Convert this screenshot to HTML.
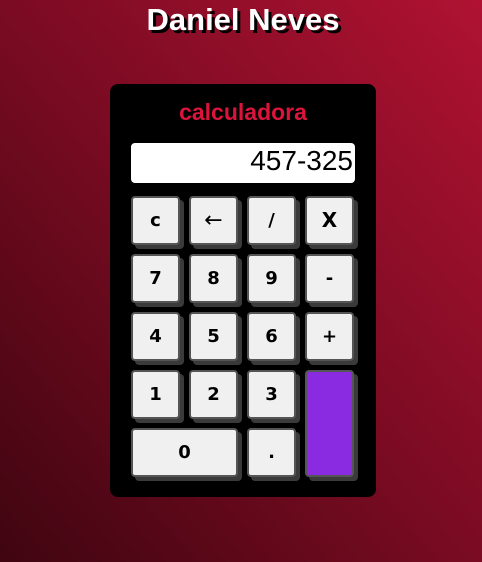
<!DOCTYPE html>
<html><head><meta charset="utf-8"><style>
html,body{margin:0;padding:0;}
body{width:482px;height:562px;overflow:hidden;position:relative;
background:linear-gradient(to top right,#3f0510 0%,#7a0b22 50%,#b01232 100%);
font-family:"Liberation Sans",Arial,sans-serif;}
h1{position:absolute;top:1px;left:0;width:486px;margin:0;text-align:center;color:#fff;font-size:31px;font-weight:bold;text-shadow:3px 3px 0 #000;line-height:38px;}
.panel{position:absolute;left:110px;top:84px;width:266px;height:413px;background:#000;border-radius:8px;}
.t{position:absolute;left:0;width:266px;top:15px;text-align:center;color:#dc143c;font-weight:bold;font-size:23px;}
.disp{position:absolute;left:21px;top:59px;width:224px;height:40px;background:#fff;border-radius:4px;font-size:28px;text-align:right;box-sizing:border-box;padding-right:2px;line-height:36px;color:#000;}
.b{position:absolute;width:49px;height:49px;box-sizing:border-box;border:2px solid #555;border-radius:4px;background:#f0f0f0;box-shadow:4px 4px 0 #3a3a3a;font-family:"DejaVu Sans","Liberation Sans",sans-serif;font-weight:bold;font-size:18px;text-align:center;line-height:45px;color:#000;}
</style></head><body>
<h1>Daniel Neves</h1>
<div class="panel">
<div class="t">calculadora</div>
<div class="disp">457-325</div>
<div class="b" style="left:21px;top:112px">c</div>
<div class="b" style="left:79px;top:112px;font-weight:normal;font-size:22px">←</div>
<div class="b" style="left:137px;top:112px">/</div>
<div class="b" style="left:195px;top:112px;font-size:20px">X</div>
<div class="b" style="left:21px;top:170px">7</div>
<div class="b" style="left:79px;top:170px">8</div>
<div class="b" style="left:137px;top:170px">9</div>
<div class="b" style="left:195px;top:170px">-</div>
<div class="b" style="left:21px;top:228px">4</div>
<div class="b" style="left:79px;top:228px">5</div>
<div class="b" style="left:137px;top:228px">6</div>
<div class="b" style="left:195px;top:228px">+</div>
<div class="b" style="left:21px;top:286px">1</div>
<div class="b" style="left:79px;top:286px">2</div>
<div class="b" style="left:137px;top:286px">3</div>
<div class="b" style="left:195px;top:286px;height:107px;background:#8a2be2"></div>
<div class="b" style="left:21px;top:344px;width:107px">0</div>
<div class="b" style="left:137px;top:344px">.</div>
</div>
</body></html>
